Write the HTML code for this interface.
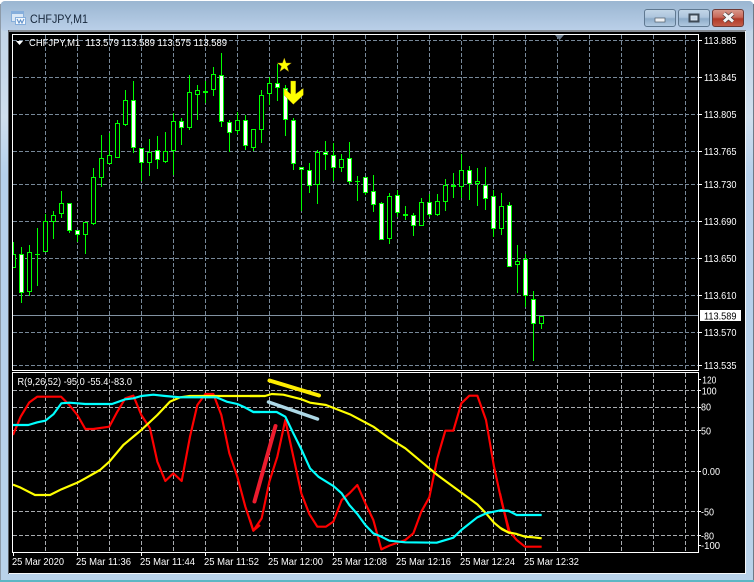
<!DOCTYPE html>
<html><head><meta charset="utf-8"><style>
html,body{margin:0;padding:0;background:#fff;width:754px;height:582px;overflow:hidden}
svg{display:block}
text{font-family:"Liberation Sans",sans-serif;font-size:10.5px;fill:#fff}
</style></head><body>
<svg width="754" height="582" viewBox="0 0 754 582" xmlns="http://www.w3.org/2000/svg">
<defs>
<linearGradient id="t" x1="0" y1="0" x2="0" y2="1"><stop offset="0" stop-color="#9ab6d1"/><stop offset="1" stop-color="#bbd0e9"/></linearGradient>
<linearGradient id="s" x1="0" y1="0" x2="0" y2="1"><stop offset="0" stop-color="#bed2e6"/><stop offset=".2" stop-color="#cfdfee"/><stop offset=".3" stop-color="#b5d0ec"/><stop offset="1" stop-color="#b9d2ea"/></linearGradient>
<linearGradient id="b" x1="0" y1="0" x2="0" y2="1"><stop offset="0" stop-color="#c3d6e8"/><stop offset=".45" stop-color="#adc5dd"/><stop offset=".55" stop-color="#8eacc9"/><stop offset="1" stop-color="#b3cbe2"/></linearGradient>
<linearGradient id="c" x1="0" y1="0" x2="0" y2="1"><stop offset="0" stop-color="#d99a8c"/><stop offset=".45" stop-color="#c8695a"/><stop offset=".55" stop-color="#b13a28"/><stop offset="1" stop-color="#c4604c"/></linearGradient>
<clipPath id="m"><rect x="13" y="35" width="685" height="335"/></clipPath>
</defs>
<rect x="0" y="1" width="754" height="581" rx="5" fill="url(#s)"/>
<rect x="1" y="1" width="752" height="30" rx="4" fill="url(#t)"/>
<rect x="0" y="4" width="1" height="578" fill="#8d9aa8"/>
<rect x="753" y="4" width="1" height="578" fill="#6d7a88"/>
<rect x="0" y="580" width="754" height="2" fill="#5cb6c4"/>
<rect x="8" y="30" width="738" height="2" fill="#858b92"/>
<rect x="8" y="30" width="1" height="544" fill="#5a5f66"/>
<rect x="9" y="32" width="736" height="541" fill="#000"/>
<rect x="745" y="31" width="1" height="543" fill="#f4f7fa"/>
<rect x="9" y="573" width="737" height="1" fill="#f4f7fa"/>

<!-- title icon -->
<rect x="11.500" y="11.500" width="12" height="10" fill="#dbe8f6" stroke="#86aedb"/>
<rect x="12" y="11" width="11" height="3" fill="#86aedb"/>
<rect x="15.500" y="17.500" width="10" height="7" fill="#f2f7fc" stroke="#86aedb"/>
<path d="M17 19l2 4 1.500-3 1.500 3 2-4" fill="none" stroke="#5a8cc8"/>
<text x="30" y="23" textLength="58" lengthAdjust="spacingAndGlyphs" style="font-size:12px;fill:#16263a">CHFJPY,M1</text>

<!-- buttons -->
<rect x="644.500" y="9.500" width="31" height="17" rx="2.500" fill="url(#b)" stroke="#5f7890"/>
<rect x="678.500" y="9.500" width="31" height="17" rx="2.500" fill="url(#b)" stroke="#5f7890"/>
<rect x="712.500" y="9.500" width="31" height="17" rx="2.500" fill="url(#c)" stroke="#6e3a36"/>
<rect x="655" y="18" width="10" height="4" fill="#eef1f4" stroke="#4e5a66" stroke-width=".7"/>
<rect x="689.500" y="14.500" width="9" height="7" fill="none" stroke="#3e4a56" stroke-width="2"/>
<rect x="691" y="16" width="6" height="4" fill="#c6d6e6" stroke="#eef2f6" stroke-width=".6"/>
<path d="M724 13.500l9 8M733 13.500l-9 8" stroke="#4a3a3a" stroke-width="4.500" fill="none"/>
<path d="M724 13.500l9 8M733 13.500l-9 8" stroke="#f4f4f4" stroke-width="3" fill="none"/>

<!-- grid -->
<g fill="none" shape-rendering="crispEdges">
<path stroke="#778899" stroke-dasharray="4 2" d="M13 40.500H698M13 77.500H698M13 114.500H698M13 151.500H698M13 184.500H698M13 221.500H698M13 258.500H698M13 295.500H698M13 332.500H698M13 365.500H698"/>
<path stroke="#778899" stroke-dasharray="4 2" d="M45.500 35V370M77.500 35V370M109.500 35V370M141.500 35V370M173.500 35V370M205.500 35V370M237.500 35V370M269.500 35V370M301.500 35V370M333.500 35V370M365.500 35V370M397.500 35V370M429.500 35V370M461.500 35V370M493.500 35V370M525.500 35V370M557.500 35V370M589.500 35V370M621.500 35V370M653.500 35V370M685.500 35V370"/>
<path stroke="#a8acb0" stroke-dasharray="4 2" d="M13 390.500H698M13 407.500H698M13 430.500H698M13 471.500H698M13 511.500H698M13 535.500H698"/>
<path stroke="#a8acb0" stroke-dasharray="4 2" d="M45.500 373V552M77.500 373V552M109.500 373V552M141.500 373V552M173.500 373V552M205.500 373V552M237.500 373V552M269.500 373V552M301.500 373V552M333.500 373V552M365.500 373V552M397.500 373V552M429.500 373V552M461.500 373V552M493.500 373V552M525.500 373V552M557.500 373V552M589.500 373V552M621.500 373V552M653.500 373V552M685.500 373V552"/>
<path stroke="#8292a2" d="M13 315.500H698"/>
</g>
<path d="M555 35h9l-4.500 5z" fill="#6b7b8c"/>

<!-- candles -->
<g clip-path="url(#m)" shape-rendering="crispEdges">
<path fill="none" stroke="#00ff00" d="M13.500 242V268M21.500 247V303M29.500 245V296M37.500 228V286M45.500 214V252M53.500 211V239M61.500 191V218M69.500 203V233M77.500 230V242M85.500 222V254M93.500 168V225M101.500 135V187M109.500 133V164M117.500 120V158M125.500 90V126M133.500 81V153M141.500 148V181M149.500 139V176M157.500 136V169M165.500 132V163M173.500 113V175M181.500 118V145M189.500 75V130M197.500 85V120M205.500 81V103M213.500 67V96M221.500 53V127M229.500 120V152M237.500 112V134M245.500 115V150M253.500 129V151M261.500 90V143M269.500 77V105M277.500 64V101M285.500 85V136M293.500 118V170M301.500 168V211M309.500 163V193M317.500 150V204M325.500 141V170M333.500 143V181M341.500 154V172M349.500 142V184M357.500 176V201M365.500 177V195M373.500 175V212M381.500 202V240M389.500 193V244M397.500 190V217M405.500 206V220M413.500 213V236M421.500 198V226M429.500 194V217M437.500 194V216M445.500 179V211M453.500 173V198M461.500 154V198M469.500 166V200M477.500 168V206M485.500 167V210M493.500 190V237M501.500 193V235M509.500 202V267M517.500 245V293M525.500 254V307M533.500 291V361M541.500 316V329"/>
<path fill="none" stroke="#00ff00" d="M35 254.500h5M355 181.500h5"/>
<path fill="none" stroke="#00ff00" stroke-width="2" d="M203 92h5M403 215h5M451 186h5"/>
<path fill="#000" stroke="#00ff00" d="M11.500 254.500h4v13h-4zM27.500 252.500h4v39h-4zM43.500 221.500h4v30h-4zM51.500 215.500h4v6h-4zM59.500 203.500h4v10h-4zM83.500 222.500h4v12h-4zM91.500 177.500h4v46h-4zM99.500 158.500h4v19h-4zM107.500 155.500h4v8h-4zM115.500 123.500h4v34h-4zM123.500 100.500h4v24h-4zM147.500 152.500h4v10h-4zM163.500 151.500h4v10h-4zM171.500 121.500h4v29h-4zM187.500 92.500h4v35h-4zM195.500 90.500h4v4h-4zM211.500 74.500h4v15h-4zM235.500 120.500h4v10h-4zM251.500 129.500h4v18h-4zM259.500 95.500h4v34h-4zM267.500 83.500h4v10h-4zM315.500 152.500h4v32h-4zM339.500 159.500h4v8h-4zM387.500 196.500h4v42h-4zM419.500 202.500h4v23h-4zM435.500 201.500h4v13h-4zM443.500 185.500h4v16h-4zM459.500 170.500h4v16h-4zM475.500 181.500h4v2h-4zM499.500 206.500h4v22h-4zM515.500 261.500h4v3h-4zM539.500 316.500h4v7h-4z"/>
<path fill="#fff" stroke="#00ff00" d="M19.500 254.500h4v38h-4zM67.500 203.500h4v27h-4zM75.500 230.500h4v4h-4zM131.500 100.500h4v47h-4zM139.500 148.500h4v14h-4zM155.500 150.500h4v9h-4zM179.500 121.500h4v6h-4zM219.500 75.500h4v46h-4zM227.500 122.500h4v10h-4zM243.500 120.500h4v25h-4zM275.500 83.500h4v4h-4zM283.500 88.500h4v31h-4zM291.500 120.500h4v43h-4zM299.500 167.500h4v2h-4zM307.500 170.500h4v15h-4zM323.500 152.500h4v2h-4zM331.500 155.500h4v12h-4zM347.500 158.500h4v23h-4zM363.500 177.500h4v15h-4zM371.500 191.500h4v13h-4zM379.500 203.500h4v36h-4zM395.500 195.500h4v17h-4zM411.500 215.500h4v10h-4zM427.500 202.500h4v12h-4zM467.500 170.500h4v13h-4zM483.500 185.500h4v13h-4zM491.500 196.500h4v32h-4zM507.500 205.500h4v61h-4zM523.500 259.500h4v36h-4zM531.500 299.500h4v24h-4z"/>
</g>

<!-- star and arrow -->
<polygon points="284.300,58 286.100,63 291.300,63 287.100,66.300 288.700,71.500 284.300,68.400 279.900,71.500 281.500,66.300 277.300,63 282.500,63" fill="#ffff00" stroke="#9a7d10" stroke-width=".4"/>
<g transform="translate(250,0) scale(.33333)"><polygon points="122,243 137,243 137,282 160,265 160,285 130,313 102,285 102,265 122,282" fill="#ffff00" stroke="#a08a10" stroke-width="1"/></g>

<!-- indicator lines -->
<g fill="none" stroke-linejoin="round">
<g transform="translate(0,370) scale(.33333)" stroke-width="6.500">
<polyline stroke="#ff0000" points="39,195 62,140 88,97 112,80 183,80 208,105 232,135 256,177 280,177 328,170 352,125 376,85 400,77 424,135 450,175 472,275 496,333 520,310 545,333 570,200 592,105 616,72 640,72 664,135 688,250 712,320 736,410 760,482 780,465"/>
<polyline stroke="#ffff00" points="39,344 62,353 105,375 150,375 184,358 232,338 256,325 300,300 328,275 370,225 424,180 472,135 510,95 540,82 570,78 780,78"/>
<polyline stroke="#00ffff" points="39,165 85,165 112,157 136,152 160,133 184,100 208,98 232,100 256,102 336,102 376,88 400,85 424,78 460,74 496,78 540,82 650,82 680,95 712,102 736,113 760,126 780,126"/>
</g>
<g transform="translate(250,370) scale(.33333)" stroke-width="6.500">
<polyline stroke="#ff0000" points="0,450 10,482 35,445 58,335 82,260 106,150 130,260 154,370 178,432 202,470 228,470 250,455 275,390 298,370 322,345 346,400 370,450 394,538 418,527 466,510 490,490 514,425 538,382 562,265 586,182 610,182 634,100 658,77 682,77 708,150 732,290 756,400 780,490"/>
<polyline stroke="#ffff00" points="0,78 45,78 65,72 100,74 155,88 180,98 228,105 300,133 370,170 418,205 466,235 514,275 562,315 634,368 682,403 708,430 732,458 756,478 780,490"/>
<polyline stroke="#00ffff" points="0,120 10,126 80,126 106,140 130,190 155,240 180,295 205,320 250,348 275,370 298,405 322,432 346,465 370,490 394,500 418,512 466,517 560,518 610,503 634,480 682,442 708,430 756,420 780,424"/>
</g>
<g transform="translate(500,370) scale(.33333)" stroke-width="6.500">
<polyline stroke="#ff0000" points="0,370 25,480 50,510 75,530 125,530"/>
<polyline stroke="#ffff00" points="0,473 25,487 50,492 75,500 100,502 125,505"/>
<polyline stroke="#00ffff" points="0,422 25,422 50,435 125,435"/>
</g>
<g stroke-linecap="round">
<line x1="269.500" y1="380.500" x2="319" y2="395.500" stroke="#ffee00" stroke-width="4"/>
<line x1="268.500" y1="402" x2="317.500" y2="419" stroke="#add8e6" stroke-width="3.500"/>
<line x1="254.500" y1="501.500" x2="275.500" y2="426" stroke="#ed1c2e" stroke-width="4"/>
</g>
</g>

<!-- borders and ticks -->
<g fill="none" stroke="#fff" shape-rendering="crispEdges">
<path d="M12.500 34.500H698.500V370.500H12.500Z"/>
<path d="M12.500 372.500H698.500V552.500H12.500Z"/>
<path d="M699 40.500h3M699 77.500h3M699 114.500h3M699 151.500h3M699 184.500h3M699 221.500h3M699 258.500h3M699 295.500h3M699 332.500h3M699 365.500h3M699 379.500h2M699 390.500h2M699 407.500h2M699 430.500h2M699 471.500h2M699 511.500h2M699 535.500h2M699 545.500h2"/>
<path d="M13.500 553v3M77.500 553v3M141.500 553v3M205.500 553v3M269.500 553v3M333.500 553v3M397.500 553v3M461.500 553v3M525.500 553v3"/>
</g>
<path d="M16 41h7l-3.500 4z" fill="#fff"/>
<rect x="700" y="310" width="41" height="11" fill="#fff"/>

<!-- text -->
<g>
<text x="704" y="44" textLength="32.500" lengthAdjust="spacingAndGlyphs">113.885</text>
<text x="704" y="81" textLength="32.500" lengthAdjust="spacingAndGlyphs">113.845</text>
<text x="704" y="118" textLength="32.500" lengthAdjust="spacingAndGlyphs">113.805</text>
<text x="704" y="155" textLength="32.500" lengthAdjust="spacingAndGlyphs">113.765</text>
<text x="704" y="188" textLength="32.500" lengthAdjust="spacingAndGlyphs">113.730</text>
<text x="704" y="225" textLength="32.500" lengthAdjust="spacingAndGlyphs">113.690</text>
<text x="704" y="262" textLength="32.500" lengthAdjust="spacingAndGlyphs">113.650</text>
<text x="704" y="299" textLength="32.500" lengthAdjust="spacingAndGlyphs">113.610</text>
<text x="704" y="319.500" textLength="32.500" lengthAdjust="spacingAndGlyphs" style="fill:#000">113.589</text>
<text x="704" y="336" textLength="32.500" lengthAdjust="spacingAndGlyphs">113.570</text>
<text x="704" y="369" textLength="32.500" lengthAdjust="spacingAndGlyphs">113.535</text>
<text x="702.300" y="383.500" textLength="14" lengthAdjust="spacingAndGlyphs">120</text>
<text x="701.700" y="394.500" textLength="15" lengthAdjust="spacingAndGlyphs">100</text>
<text x="701" y="410.500" textLength="10" lengthAdjust="spacingAndGlyphs">80</text>
<text x="701" y="434.500" textLength="10" lengthAdjust="spacingAndGlyphs">50</text>
<text x="702.300" y="475" textLength="17.700" lengthAdjust="spacingAndGlyphs">0.00</text>
<text x="701" y="515.500" textLength="13" lengthAdjust="spacingAndGlyphs">-50</text>
<text x="701" y="539.500" textLength="13" lengthAdjust="spacingAndGlyphs">-80</text>
<text x="701" y="549" textLength="19" lengthAdjust="spacingAndGlyphs">-100</text>
</g>
<text x="29" y="46" textLength="198" lengthAdjust="spacingAndGlyphs" xml:space="preserve">CHFJPY,M1  113.579 113.589 113.575 113.589</text>
<text x="17.500" y="385" textLength="114.500" lengthAdjust="spacingAndGlyphs">R(9,26,52) -95.0 -55.4 -83.0</text>
<g>
<text x="12" y="565" textLength="52" lengthAdjust="spacingAndGlyphs">25 Mar 2020</text>
<text x="76" y="565" textLength="55" lengthAdjust="spacingAndGlyphs">25 Mar 11:36</text>
<text x="140" y="565" textLength="55" lengthAdjust="spacingAndGlyphs">25 Mar 11:44</text>
<text x="204" y="565" textLength="55" lengthAdjust="spacingAndGlyphs">25 Mar 11:52</text>
<text x="268" y="565" textLength="55" lengthAdjust="spacingAndGlyphs">25 Mar 12:00</text>
<text x="332" y="565" textLength="55" lengthAdjust="spacingAndGlyphs">25 Mar 12:08</text>
<text x="396" y="565" textLength="55" lengthAdjust="spacingAndGlyphs">25 Mar 12:16</text>
<text x="460" y="565" textLength="55" lengthAdjust="spacingAndGlyphs">25 Mar 12:24</text>
<text x="524" y="565" textLength="55" lengthAdjust="spacingAndGlyphs">25 Mar 12:32</text>
</g>
</svg>
</body></html>
